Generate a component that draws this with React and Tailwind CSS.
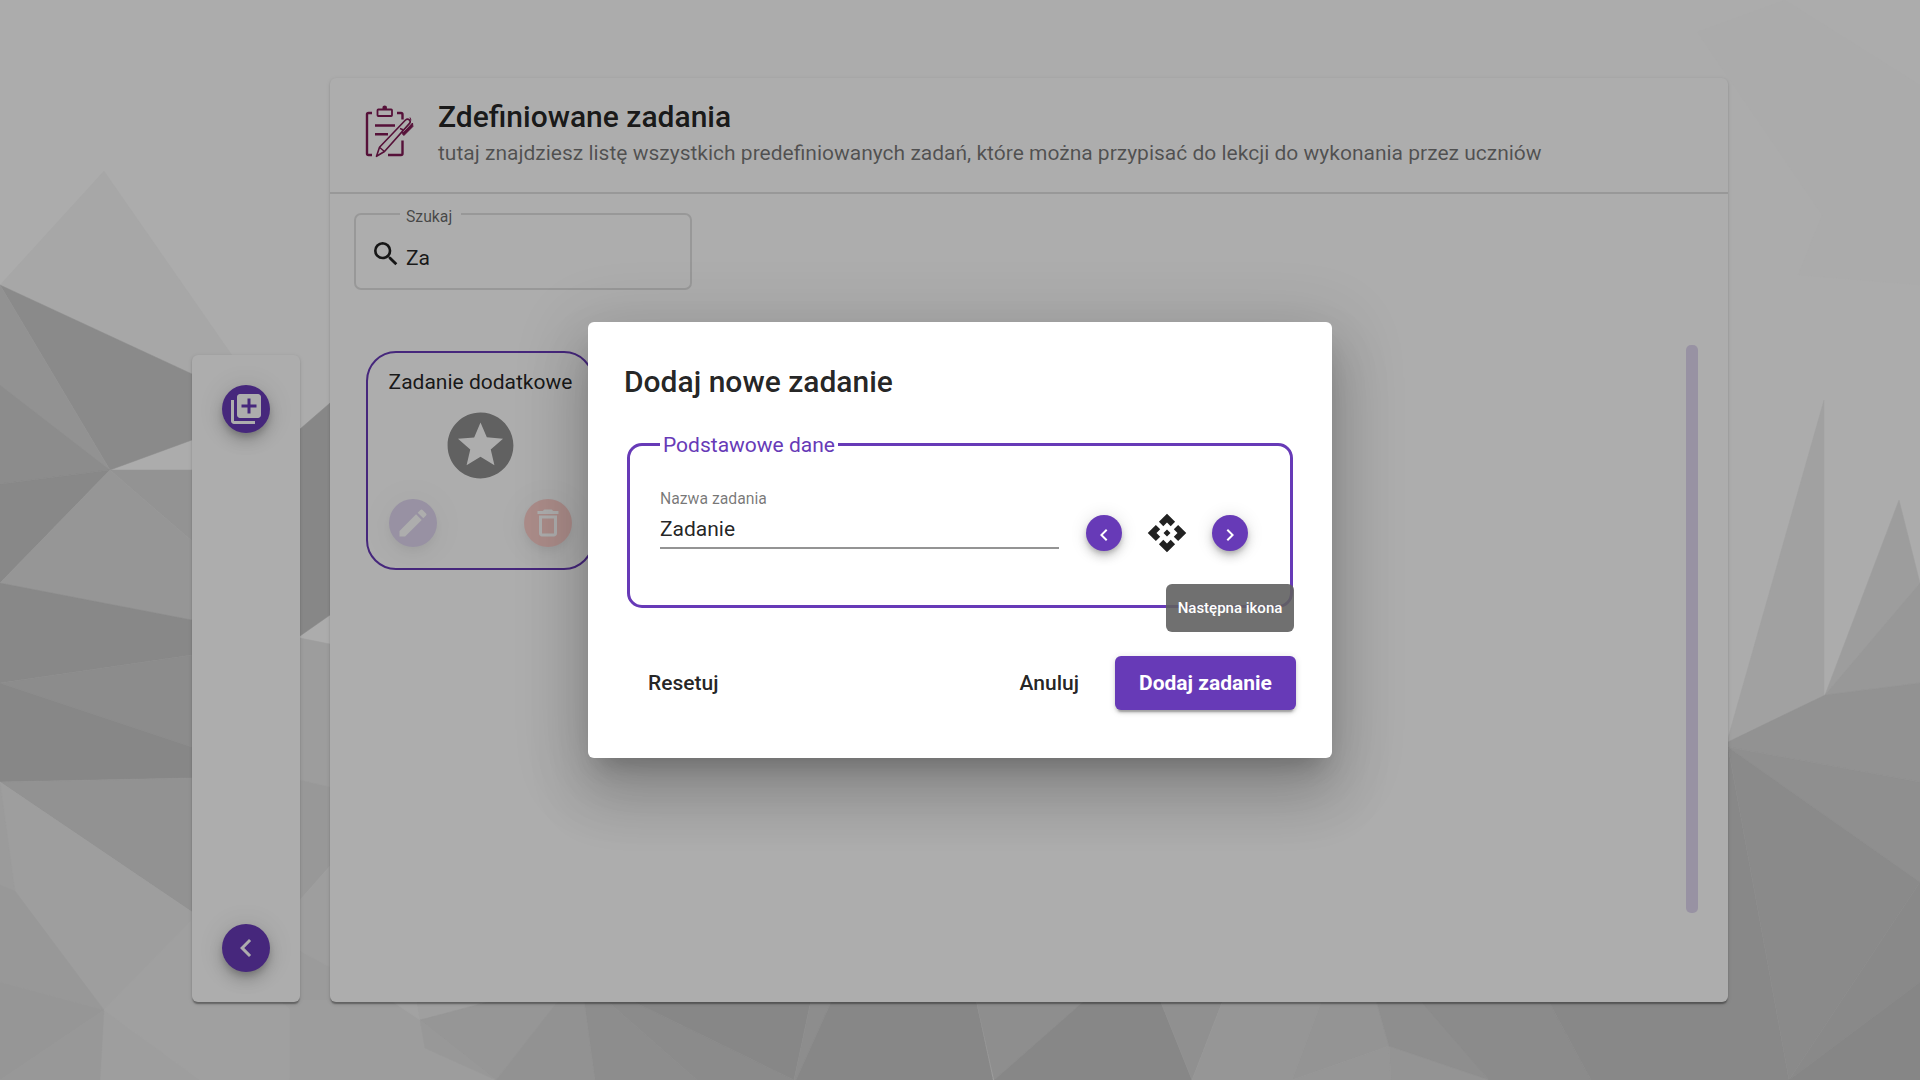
import React from "react";
import {
  MdApi,
  MdChevronLeft,
  MdChevronRight,
  MdDeleteOutline,
  MdEdit,
  MdLibraryAdd,
  MdSearch,
  MdStars,
} from "react-icons/md";

const facets = [
  ["#f6f6f6", "0,285 104,171 300,453 192,374"],
  ["#cccccc", "0,285 192,374 192,440 110,470"],
  ["#d8d8d8", "0,285 110,470 0,385"],
  ["#cecece", "0,385 110,470 0,484"],
  ["#c9c9c9", "0,484 110,470 0,583"],
  ["#d9d9d9", "110,470 192,470 192,541"],
  ["#dedede", "110,470 192,541 192,620 0,583"],
  ["#c9c9c9", "0,583 192,620 192,655 0,683"],
  ["#cecece", "0,683 192,655 192,747"],
  ["#c8c8c8", "0,683 192,747 192,778 0,782"],
  ["#d7d7d7", "0,782 192,778 192,912"],
  ["#e9e9e9", "0,782 192,912 300,912 300,1080 0,1080"],
  ["#e5e5e5", "0,782 15,891 0,885"],
  ["#e1e1e1", "0,885 15,891 104,1010 0,982"],
  ["#dedede", "0,982 104,1010 5,1077 0,1080"],
  ["#e1e1e1", "104,1010 100,1080 0,1080"],
  ["#ececec", "104,1010 192,920 290,1010 297,1080 200,1080"],
  ["#c8c8c8", "300,429 330,403 330,615 300,636"],
  ["#e7e7e7", "300,638 330,644 330,787 300,780"],
  ["#e1e1e1", "300,780 330,787 330,866 300,900"],
  ["#e9e9e9", "300,900 330,866 330,967 300,951"],
  ["#e5e5e5", "300,951 330,967 500,1080 290,1080"],
  ["#e7e7e7", "290,1000 420,1000 500,1080 290,1080"],
  ["#efefef", "390,1000 417,1000 420,1020"],
  ["#ebebeb", "417,1000 495,1000 420,1020"],
  ["#dddddd", "420,1020 495,1000 560,1000 496,1080"],
  ["#e1e1e1", "420,1020 496,1080 425,1048"],
  ["#d8d8d8", "559,1000 584,1000 595,1080 496,1080"],
  ["#d0d0d0", "584,1000 606,1000 697,1080 595,1080"],
  ["#cdcdcd", "606,1000 630,1000 794,1080 697,1080"],
  ["#c8c8c8", "630,1000 811,1000 794,1080"],
  ["#d0d0d0", "811,1000 832,1000 796,1080 794,1080"],
  ["#c8c8c8", "832,1000 976,1000 993,1080 796,1080"],
  ["#d2d2d2", "976,1000 1085,1000 994,1080"],
  ["#c8c8c8", "1085,1000 1160,1000 1192,1080 994,1080"],
  ["#d5d5d5", "1160,1000 1223,1000 1192,1080"],
  ["#dedede", "1223,1000 1322,1000 1292,1080 1192,1080"],
  ["#dadada", "1322,1000 1376,1000 1389,1046 1292,1080"],
  ["#dddddd", "1292,1080 1389,1046 1391,1080"],
  ["#dadada", "1389,1046 1391,1080 1489,1080"],
  ["#d1d1d1", "1376,1000 1422,1000 1489,1080 1389,1046"],
  ["#cdcdcd", "1420,1000 1489,1080 1591,1080 1548,1000"],
  ["#c9c9c9", "1548,1000 1591,1080 1789,1080 1728,747"],
  ["#fcfcfc", "1697,32 1785,0 1920,85 1920,285 1798,275 1822,215"],
  ["#ededed", "1728,738 1824,400 1824,695 1728,743"],
  ["#e8e8e8", "1825,695 1899,500 1920,583"],
  ["#e0e0e0", "1825,695 1920,583 1920,683"],
  ["#d7d7d7", "1728,742 1825,695 1920,683 1920,782 1728,747"],
  ["#d3d3d3", "1728,747 1920,782 1920,882"],
  ["#cccccc", "1728,747 1920,882 1789,1080"],
  ["#cbcbcb", "1789,1080 1920,882 1920,982"],
  ["#c6c6c6", "1789,1080 1920,982 1920,1080"],
];

function Backdrop() {
  return (
    <svg className="absolute inset-0" width="1920" height="1080" viewBox="0 0 1920 1080" aria-hidden="true">
      {facets.map(([fill, points]) => (
        <polygon key={points} points={points} fill={fill} stroke={fill} strokeWidth="0.5" />
      ))}
    </svg>
  );
}

function ClipboardIcon() {
  return (
    <svg width="52" height="56" viewBox="14 14 52 56" fill="none" stroke="#7f1a54" strokeWidth="2.4">
      <path d="M22 23h-3.500q-1.500 0-1.500 1.500V63.500q0 1.500 1.500 1.500H22" />
      <path d="M47 23h4q1.500 0 1.500 1.500V29.500M52.500 50.500V63.500q0 1.500-1.500 1.500H38" />
      <rect x="27.500" y="19.500" width="14.500" height="6.500" rx="0.800" strokeWidth="1.800" />
      <path d="M32.500 19v-2q0-1.500 2.200-1.500t2.200 1.500v2z" fill="#7f1a54" stroke="none" />
      <path d="M25 35.500h20M25 44.200h13" />
      <path d="M26.500 66.300l3-9L55.500 30q2-1.800 3.800-.2t.2 3.600L34.500 61.500z" strokeWidth="1.600" strokeLinejoin="round" />
      <path d="M29.400 57.300l5.100 4.200M50 38.500l2.500 1v3.500" strokeWidth="1.400" />
      <path d="M60 27.500l1 2.800M62.500 33l.4 3.500-9 9-1.600-1.700z" fill="#7f1a54" strokeWidth="1" />
    </svg>
  );
}

function Fab({ className, children }) {
  return (
    <button
      className={`flex items-center justify-center rounded-full bg-[#673ab7] text-white shadow-[0_4.5px_7.5px_-1.5px_rgba(0,0,0,.2),0_9px_15px_0_rgba(0,0,0,.14),0_1.5px_27px_0_rgba(0,0,0,.12)] ${className}`}
    >
      {children}
    </button>
  );
}

function MiniFab({ children }) {
  return (
    <button className="flex size-9 items-center justify-center rounded-full bg-[#673ab7] pt-1 text-white shadow-[0_3px_5px_-1px_rgba(0,0,0,.2),0_6px_10px_0_rgba(0,0,0,.14),0_1px_18px_0_rgba(0,0,0,.12)]">
      {children}
    </button>
  );
}

function Sidebar() {
  return (
    <aside className="flex h-[647px] w-[108px] flex-col items-center justify-between rounded-[6px] bg-white py-[30px] shadow-[0_3px_1.5px_-1.5px_rgba(0,0,0,.2),0_1.5px_1.5px_0_rgba(0,0,0,.14),0_1.5px_4.5px_0_rgba(0,0,0,.12)]">
      <Fab className="size-12">
        <MdLibraryAdd size={36} />
      </Fab>
      <Fab className="size-12">
        <MdChevronLeft size={36} />
      </Fab>
    </aside>
  );
}

function SearchField() {
  return (
    <fieldset className="ml-6 mt-[10px] h-[86px] w-[338px] rounded-[7px] border-2 border-black/12 pl-[44px]">
      <legend className="h-[20px] pl-[6px] pr-[9px] text-[15.75px] leading-[25px] text-black/60">Szukaj</legend>
      <div className="-ml-[30px] mt-[14px] flex items-start gap-1">
        <MdSearch size={32} className="text-black/87" />
        <span className="mt-[6px] text-[21px] leading-[28px] text-black/87">Za</span>
      </div>
    </fieldset>
  );
}

function TaskCard() {
  return (
    <article className="ml-9 mt-[61px] flex h-[219px] w-[228px] flex-col items-center rounded-[30px] border-2 border-[#673ab7] pl-[21px] pr-[20px] pt-[14px]">
      <h3 className="whitespace-nowrap text-[21px] leading-[30px] text-black/87">Zadanie dodatkowe</h3>
      <MdStars size={79} className="mr-px mt-[9px] shrink-0 text-[#8f8f8f]" />
      <div className="mt-[14px] flex w-full justify-between">
        <Fab className="size-12 opacity-20">
          <MdEdit size={36} />
        </Fab>
        <Fab className="size-12 bg-[#f44336]! opacity-25">
          <MdDeleteOutline size={36} />
        </Fab>
      </div>
    </article>
  );
}

function TasksPanel() {
  return (
    <main className="flex h-[924px] w-[1398px] flex-col rounded-[6px] bg-white shadow-[0_3px_1.5px_-1.5px_rgba(0,0,0,.2),0_1.5px_1.5px_0_rgba(0,0,0,.14),0_1.5px_4.5px_0_rgba(0,0,0,.12)]">
      <header className="flex h-[116px] shrink-0 gap-[22px] border-b-2 border-black/12 pl-[34px] pt-[21px]">
        <div className="pt-[5px]">
          <ClipboardIcon />
        </div>
        <div>
          <h1 className="text-[30px] font-medium leading-[36px] text-black/87">Zdefiniowane zadania</h1>
          <p className="text-[21px] leading-[36px] text-black/54">
            tutaj znajdziesz listę wszystkich predefiniowanych zadań, które można przypisać do lekcji do wykonania przez uczniów
          </p>
        </div>
      </header>
      <div className="flex justify-between">
        <div>
          <SearchField />
          <TaskCard />
        </div>
        <div className="mr-[30px] mt-[151px] h-[568px] w-3 rounded-[5px] bg-[#673ab7]/20" />
      </div>
    </main>
  );
}

function IconPicker() {
  return (
    <div className="relative ml-[27px] mt-[54px] flex items-center gap-[24px]">
      <MiniFab>
        <MdChevronLeft size={24} />
      </MiniFab>
      <MdApi size={42} className="text-black/87" />
      <MiniFab>
        <MdChevronRight size={24} />
      </MiniFab>
      <div className="absolute left-[80px] top-[72px] flex h-12 w-32 items-center justify-center whitespace-nowrap rounded-[6px] bg-[#616161]/90 text-[15px] font-medium text-white">
        Następna ikona
      </div>
    </div>
  );
}

function AddTaskDialog() {
  return (
    <section className="flex h-[436px] w-[744px] flex-col rounded-[6px] bg-white px-9 pt-10 shadow-[0_16.5px_22.5px_-10.5px_rgba(0,0,0,.2),0_36px_57px_4.5px_rgba(0,0,0,.14),0_13.5px_69px_12px_rgba(0,0,0,.12)]">
      <h2 className="text-[30px] font-medium leading-[40px] text-black/87">Dodaj nowe zadanie</h2>
      <fieldset className="ml-[3px] mt-[29px] h-[177px] w-[666px] rounded-[15px] border-3 border-[#673ab7] pl-[30px]">
        <legend className="h-[27px] px-[3px] text-[21px] leading-[29px] text-[#673ab7]">Podstawowe dane</legend>
        <div className="flex items-start">
          <label className="mt-[31px] flex w-[399px] flex-col border-b-2 border-[#949494]">
            <span className="text-[15.75px] leading-[20px] text-black/54">Nazwa zadania</span>
            <span className="h-[38px] pt-[6px] text-[21px] leading-[28px] text-black/87">Zadanie</span>
          </label>
          <IconPicker />
        </div>
      </fieldset>
      <footer className="mt-12 flex items-center">
        <button className="ml-6 text-[21px] font-medium leading-[54px] text-black/87">Resetuj</button>
        <button className="ml-auto text-[21px] font-medium leading-[54px] text-black/87">Anuluj</button>
        <button className="ml-9 h-[54px] w-[181px] rounded-[6px] bg-[#673ab7] text-[21px] font-bold leading-[54px] text-white shadow-[0_4.5px_1.5px_-3px_rgba(0,0,0,.2),0_3px_3px_0_rgba(0,0,0,.14),0_1.5px_7.5px_0_rgba(0,0,0,.12)]">
          Dodaj zadanie
        </button>
      </footer>
    </section>
  );
}

export default function App() {
  return (
    <div className="relative h-[1080px] w-[1920px] overflow-hidden bg-[#fefefe] font-['Roboto','Noto_Sans',sans-serif]">
      <Backdrop />
      <div className="relative flex h-full items-end gap-[30px] pb-[78px] pl-48">
        <Sidebar />
        <TasksPanel />
      </div>
      <div className="absolute inset-0 flex items-center justify-center bg-black/32">
        <AddTaskDialog />
      </div>
    </div>
  );
}
